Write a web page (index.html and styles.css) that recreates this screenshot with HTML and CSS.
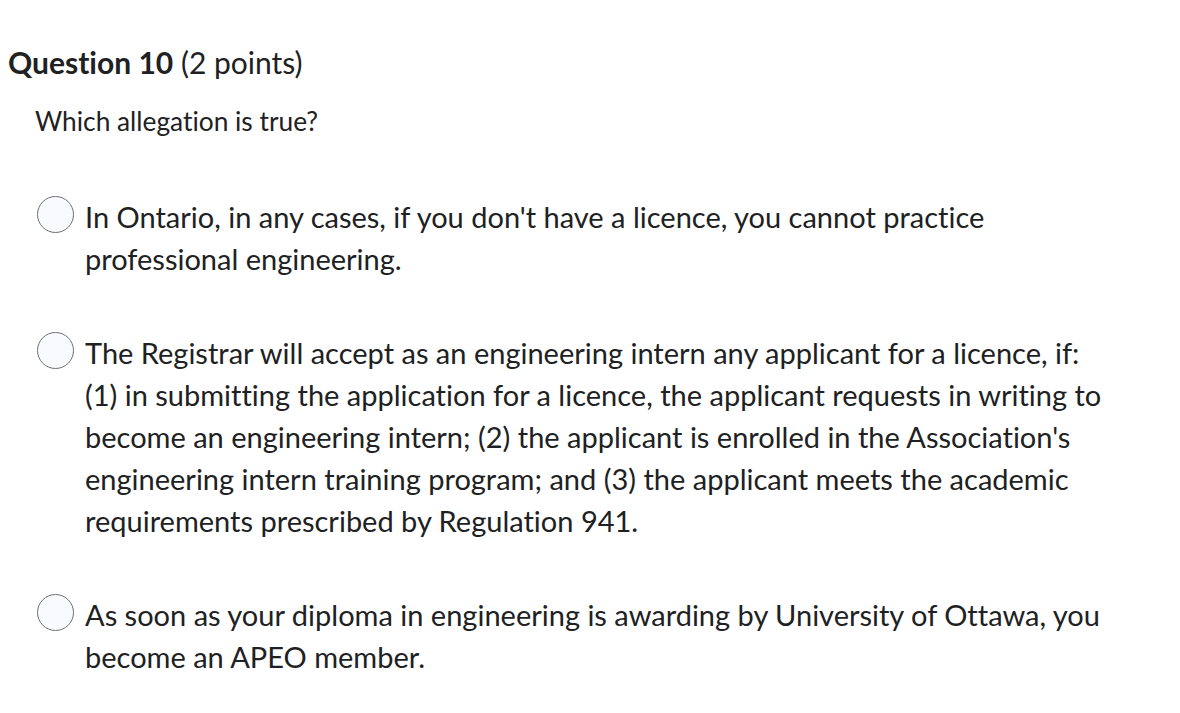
FILE: index.html
```html
<!DOCTYPE html>
<html lang="en">
<head>
<meta charset="utf-8">
<link rel="stylesheet" href="styles.css">
</head>
<body>
<div class="question">
  <h2 class="q-title"><strong>Question 10</strong> <span class="pts">(2 points)</span></h2>
  <p class="q-text">Which allegation is true?</p>
  <div class="options">
    <label class="option">
      <span class="radio"></span>
      <span class="opt-text">In Ontario, in any cases, if you don't have a licence, you cannot practice professional engineering.</span>
    </label>
    <label class="option">
      <span class="radio"></span>
      <span class="opt-text">The Registrar will accept as an engineering intern any applicant for a licence, if: (1) in submitting the application for a licence, the applicant requests in writing to become an engineering intern; (2) the applicant is enrolled in the Association's engineering intern training program; and (3) the applicant meets the academic requirements prescribed by Regulation 941.</span>
    </label>
    <label class="option">
      <span class="radio"></span>
      <span class="opt-text">As soon as your diploma in engineering is awarding by University of Ottawa, you become an APEO member.</span>
    </label>
  </div>
</div>
</body>
</html>
```

FILE: styles.css
```css
html, body {
  margin: 0;
  padding: 0;
  background: #ffffff;
}
body {
  font-family: Lato, "Noto Sans", sans-serif;
  color: #202122;
  font-variant-ligatures: none;
}
.question {
  padding: 44px 0 0 8px;
  width: 1107px;
}
.q-title {
  margin: 0;
  font-size: 30px;
  line-height: 36px;
  font-weight: 400;
}
.q-title strong {
  font-weight: 700;
}
.q-text {
  margin: 23px 0 0 27px;
  font-size: 26.3px;
  line-height: 36px;
}
.options {
  margin: 57px 0 0 29px;
  display: flex;
  flex-direction: column;
  gap: 52px;
}
.option {
  display: flex;
  align-items: flex-start;
  gap: 11px;
}
.radio {
  flex: none;
  width: 35px;
  height: 35px;
  margin-top: 0;
  border: 1px solid #6f7274;
  border-radius: 50%;
  background: #f9fafe;
}
.opt-text {
  font-size: 29px;
  line-height: 42px;
}
```
